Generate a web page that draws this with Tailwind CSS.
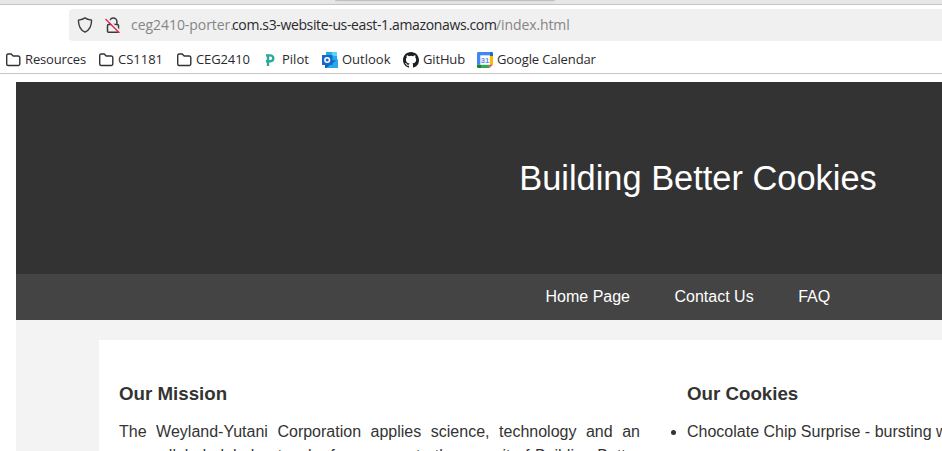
<!DOCTYPE html>
<html lang="en">
<head>
<meta charset="utf-8">
<title>Building Better Cookies</title>
<script src="https://cdn.jsdelivr.net/npm/@tailwindcss/browser@4"></script>
</head>
<body class="h-[451px] w-[942px] overflow-hidden bg-white font-['Liberation_Sans',Arial,sans-serif] text-base text-[#333]">
<div class="flex h-[5px] border-b border-[#c5c5c5] bg-[#e7e7e7] pl-[335px]"><div class="h-[1px] w-[220px] rounded-b-sm bg-[#c0c0c0] shadow-sm"></div></div>
<div class="flex h-[68px] flex-col bg-white pt-1 font-['Open_Sans','Noto_Sans',sans-serif] text-[#2a2a2e]">
  <div class="ml-[69px] flex h-8 items-center rounded-l bg-[#f0f0f0] pl-2">
    <svg class="size-4" viewBox="0 0 16 16" fill="none" stroke="#3b3b3f" stroke-width="1.4" stroke-linejoin="round"><path d="M8 .9C6.3 2.2 3.7 2.8 1.4 3.1C1.4 8.5 3.2 13.2 8 15.2C12.8 13.2 14.6 8.5 14.6 3.1C12.3 2.8 9.7 2.2 8 .9Z"/></svg>
    <svg class="ml-3 size-4" viewBox="0 0 16 16" fill="none" stroke="#3b3b3f" stroke-width="1.5"><path d="M4.7 7V4.6a3.6 3.6 0 0 1 7.2 0V7M3.5 7.5h9a1 1 0 0 1 1 1v5.7a1 1 0 0 1-1 1h-9a1 1 0 0 1-1-1V8.5a1 1 0 0 1 1-1Z"/><path d="M1.7 1.2 15.7 15.2" stroke="#f0f0f0" stroke-width="2"/><path d="M.5 2 14.5 16" stroke="#e22850" stroke-width="1.4"/></svg>
    <div class="ml-[10px] flex whitespace-pre text-[14px] leading-5"><span class="w-[101px] tracking-[-0.05px] text-[#858585]">ceg2410-porter.</span><span class="w-[264px] tracking-[-0.36px]">com.s3-website-us-east-1.amazonaws.com</span><span class="tracking-[-0.1px] text-[#858585]">/index.html</span></div>
  </div>
  <div class="flex h-8 items-center whitespace-nowrap pl-[5px] pt-[5px] text-[13px]">
    <div class="flex w-[93px] items-center gap-1"><svg class="size-4" viewBox="0 0 16 16" fill="none" stroke="#333" stroke-width="1.4"><path d="M1.7 12V3.5a1.5 1.5 0 0 1 1.5-1.500h3l2 2h5.100a1.500 1.500 0 0 1 1.500 1.500V12a1.500 1.500 0 0 1-1.500 1.500H3.200A1.500 1.500 0 0 1 1.700 12Z"/></svg><span class="tracking-[-0.14px]">Resources</span></div>
    <div class="flex w-[78px] items-center gap-1"><svg class="size-4" viewBox="0 0 16 16" fill="none" stroke="#333" stroke-width="1.4"><path d="M1.7 12V3.5a1.5 1.5 0 0 1 1.5-1.500h3l2 2h5.100a1.500 1.500 0 0 1 1.500 1.500V12a1.500 1.500 0 0 1-1.500 1.500H3.200A1.500 1.500 0 0 1 1.700 12Z"/></svg><span>CS1181</span></div>
    <div class="flex w-[86px] items-center gap-1"><svg class="size-4" viewBox="0 0 16 16" fill="none" stroke="#333" stroke-width="1.4"><path d="M1.7 12V3.5a1.5 1.5 0 0 1 1.5-1.500h3l2 2h5.100a1.500 1.500 0 0 1 1.500 1.500V12a1.500 1.500 0 0 1-1.500 1.500H3.200A1.500 1.500 0 0 1 1.700 12Z"/></svg><span class="tracking-[-0.12px]">CEG2410</span></div>
    <div class="flex w-[60px] items-center gap-1"><svg class="size-4" viewBox="0 0 16 16" fill="none" stroke="#2aa89b" stroke-width="2.4"><path d="M6 14V3M4 3.400h4.400a2.700 2.700 0 0 1 0 5.800H4"/></svg><span>Pilot</span></div>
    <div class="flex w-[81px] items-center gap-1"><svg class="size-4" viewBox="0 0 16 16"><path fill="#1490df" d="M4 0h11v12H4z"/><path fill="#50d9ff" d="M9.500 0H15v4H9.500z"/><path fill="#28a8ea" d="M4 0h5.500v4H4zM9.500 4H15v4H9.500z"/><path fill="#0b65b3" d="M3 8l13 1v7H3z"/><path fill="#28a8ea" d="m4 16 12-9v9z"/><path fill="#1769c5" d="M0 3h10.500v10H0z"/><circle cx="5.200" cy="8" r="2.300" fill="none" stroke="#fff" stroke-width="1.500"/></svg><span>Outlook</span></div>
    <div class="flex w-[74px] items-center gap-1"><svg class="size-4" viewBox="0 0 16 16" fill="#1b1f23"><path d="M8 0C3.580 0 0 3.580 0 8c0 3.540 2.290 6.530 5.470 7.590.4.070.55-.17.55-.38 0-.19-.01-.82-.01-1.490-2.010.37-2.530-.49-2.690-.94-.09-.23-.48-.94-.82-1.130-.28-.15-.68-.52-.01-.53.63-.01 1.080.58 1.230.82.72 1.210 1.870.87 2.330.66.07-.52.28-.87.51-1.070-1.780-.2-3.640-.89-3.640-3.950 0-.87.31-1.590.82-2.150-.08-.2-.36-1.020.08-2.120 0 0 .67-.21 2.200.82a7.600 7.600 0 0 1 4 0c1.530-1.040 2.200-.82 2.200-.82.44 1.100.16 1.920.08 2.120.51.56.82 1.270.82 2.150 0 3.070-1.870 3.750-3.650 3.950.29.25.54.73.54 1.480 0 1.070-.01 1.930-.01 2.200 0 .21.15.46.55.38A8 8 0 0 0 16 8c0-4.420-3.580-8-8-8Z"/></svg><span class="tracking-[-0.15px]">GitHub</span></div>
    <div class="flex items-center gap-1"><svg class="size-4" viewBox="0 0 16 16"><path fill="#4285f4" d="M1.200 0h11.200v4H4v8.400H0V1.200Q0 0 1.200 0Z"/><path fill="#1967d2" d="M12.400 0h2.400Q16 0 16 1.200V4h-3.600z"/><path fill="#fbbc04" d="M12.400 4H16v8.400h-3.600z"/><path fill="#34a853" d="M4 12.400h8.400V16H4z"/><path fill="#188038" d="M0 12.400h4V16H1.200Q0 16 0 14.800z"/><path fill="#ea4335" d="M12.400 12.400H16L12.400 16z"/><path fill="#fff" d="M3.300 3.300h9.400v9.400H3.300z"/><text x="8" y="10.900" text-anchor="middle" font-family="Liberation Sans" font-size="7.500" font-weight="bold" fill="#5b8df5">31</text></svg><span class="tracking-[-0.12px]">Google Calendar</span></div>
  </div>
</div>
<div class="h-px bg-[#c5c5c5]"></div>
<main class="ml-4 mt-2 w-[1364px] bg-[#f3f3f3]">
  <header class="flex h-48 items-center justify-center bg-[#333] pt-px text-[34.4px] text-white">Building Better Cookies</header>
  <nav class="flex h-[46px] items-center gap-[44.500px] bg-[#444] pl-[529.500px] text-white"><a>Home Page</a><a>Contact Us</a><a>FAQ</a></nav>
  <div class="px-[83px] pt-5">
    <div class="flex h-[300px] gap-[47px] bg-white px-5 pt-[43px]">
      <section class="w-[521px] shrink-0"><h3 class="text-[18.72px] leading-[22px] font-bold">Our Mission</h3><p class="mt-[15px] text-justify leading-6">The Weyland-Yutani Corporation applies science, technology and an unparalleled global network of resources to the pursuit of Building Better Cookies.</p></section>
      <section class="w-[560px]"><h3 class="text-[18.72px] leading-[22px] font-bold">Our Cookies</h3><ul class="mt-[15px] list-disc leading-6"><li>Chocolate Chip Surprise - bursting with chocolate</li></ul></section>
    </div>
  </div>
</main>
</body>
</html>
